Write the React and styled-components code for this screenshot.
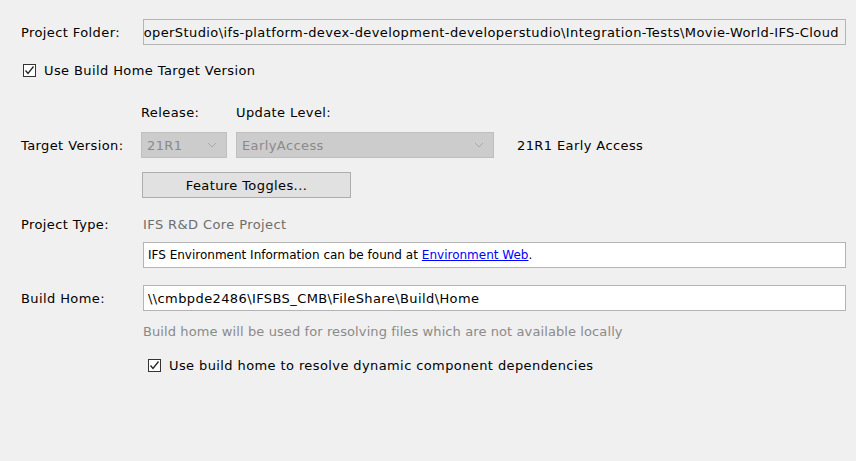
import React from "react";
import styled, { createGlobalStyle } from "styled-components";

const GlobalStyle = createGlobalStyle`
  html, body {
    margin: 0;
    padding: 0;
    background: #f0f0f0;
  }
  body {
    font-family: "DejaVu Sans", "Liberation Sans", sans-serif;
    font-size: 13px;
    letter-spacing: 0.4px;
    color: #000;
  }
`;

function Chevron() {
  return (
    <svg width="10" height="6" viewBox="0 0 10 6">
      <polyline points="1,1 5,5 9,1" fill="none" stroke="#a8a8a8" strokeWidth="1" />
    </svg>
  );
}

function Check() {
  return (
    <Box>
      <svg width="11" height="11" viewBox="0 0 11 11">
        <polyline points="1.5,5.5 4,8.5 9.5,1.5" fill="none" stroke="#222" strokeWidth="1.3" />
      </svg>
    </Box>
  );
}

export default function App() {
  return (
    <>
      <GlobalStyle />
      <Page>
        {/* project folder */}
        <Row $mt={19}>
          <Label>Project Folder:</Label>
          <Field $readonly $end>
            <NoWrap>
              operStudio\ifs-platform-devex-development-developerstudio\Integration-Tests\Movie-World-IFS-Cloud
            </NoWrap>
          </Field>
        </Row>

        <CheckRow $mt={18} $ml={2}>
          <Check />
          <span>Use Build Home Target Version</span>
        </CheckRow>

        {/* target version */}
        <Row $mt={26} $h={18}>
          <Label />
          <Heads>
            <Head $w={95}>Release:</Head>
            <Head>Update Level:</Head>
          </Heads>
        </Row>

        <Row $mt={11}>
          <Label>Target Version:</Label>
          <Combos>
            <Combo $w={86}>
              <span>21R1</span>
              <Chevron />
            </Combo>
            <Combo $w={258}>
              <span>EarlyAccess</span>
              <Chevron />
            </Combo>
            <Version>21R1 Early Access</Version>
          </Combos>
        </Row>

        <Row $mt={14}>
          <Label />
          <Button>Feature Toggles...</Button>
        </Row>

        <Row $mt={14} $h={24}>
          <Label>Project Type:</Label>
          <Muted $pl={2}>IFS R&amp;D Core Project</Muted>
        </Row>

        <Row $mt={6}>
          <Label />
          <Field $small>
            IFS Environment Information can be found at <Link>Environment Web</Link>.
          </Field>
        </Row>

        <Row $mt={17}>
          <Label>Build Home:</Label>
          <Field>\\cmbpde2486\IFSBS_CMB\FileShare\Build\Home</Field>
        </Row>

        <Row $mt={8} $h={24}>
          <Label />
          <Hint>Build home will be used for resolving files which are not available locally</Hint>
        </Row>

        <CheckRow $mt={15} $ml={127}>
          <Check />
          <span>Use build home to resolve dynamic component dependencies</span>
        </CheckRow>
      </Page>
    </>
  );
}

const Page = styled.div`
  display: flex;
  flex-direction: column;
  width: 856px;
  height: 461px;
  padding: 0 10px 0 21px;
  box-sizing: border-box;
  overflow: hidden;
`;

const Row = styled.div`
  display: flex;
  align-items: center;
  margin-top: ${(p) => p.$mt || 0}px;
  height: ${(p) => p.$h || 26}px;
`;

const Label = styled.div`
  width: 120px;
  flex: none;
  white-space: nowrap;
`;

const Field = styled.div`
  flex: 1;
  min-width: 0;
  height: 26px;
  box-sizing: border-box;
  display: flex;
  align-items: center;
  justify-content: ${(p) => (p.$end ? "flex-end" : "flex-start")};
  padding: 0 6px 0 4px;
  background: ${(p) => (p.$readonly ? "#f0f0f0" : "#fff")};
  border: 1px solid #b4b4b4;
  margin-left: 2px;
  white-space: nowrap;
  overflow: hidden;
  font-size: ${(p) => (p.$small ? "12px" : "13px")};
  letter-spacing: ${(p) => (p.$small ? "0" : "0.4px")};
`;

const NoWrap = styled.span`
  flex: none;
  white-space: nowrap;
`;

const CheckRow = styled.label`
  display: flex;
  align-items: center;
  gap: 8px;
  margin-top: ${(p) => p.$mt || 0}px;
  margin-left: ${(p) => p.$ml || 0}px;
  height: 14px;
`;

const Box = styled.span`
  width: 13px;
  height: 13px;
  box-sizing: border-box;
  border: 1px solid #333;
  background: #fff;
  display: flex;
  align-items: center;
  justify-content: center;
`;

const Heads = styled.div`
  display: flex;
`;

const Head = styled.div`
  width: ${(p) => (p.$w ? `${p.$w}px` : "auto")};
`;

const Combos = styled.div`
  display: flex;
  align-items: center;
  gap: 9px;
`;

const Combo = styled.div`
  width: ${(p) => p.$w}px;
  height: 26px;
  box-sizing: border-box;
  display: flex;
  align-items: center;
  justify-content: space-between;
  padding: 0 9px 0 5px;
  background: #cccccc;
  border: 1px solid #bfbfbf;
  color: #8a8a8a;
`;

const Version = styled.div`
  margin-left: 14px;
`;

const Button = styled.div`
  width: 209px;
  height: 26px;
  margin-left: 1px;
  box-sizing: border-box;
  display: flex;
  align-items: center;
  justify-content: center;
  background: #e1e1e1;
  border: 1px solid #adadad;
`;

const Muted = styled.div`
  color: #6d6d6d;
  padding-left: ${(p) => p.$pl || 0}px;
`;

const Hint = styled.div`
  color: #8a8a8a;
  padding-left: 2px;
  letter-spacing: 0.1px;
`;

const Link = styled.span`
  color: #0000ff;
  text-decoration: underline;
  margin-left: 4px;
`;
